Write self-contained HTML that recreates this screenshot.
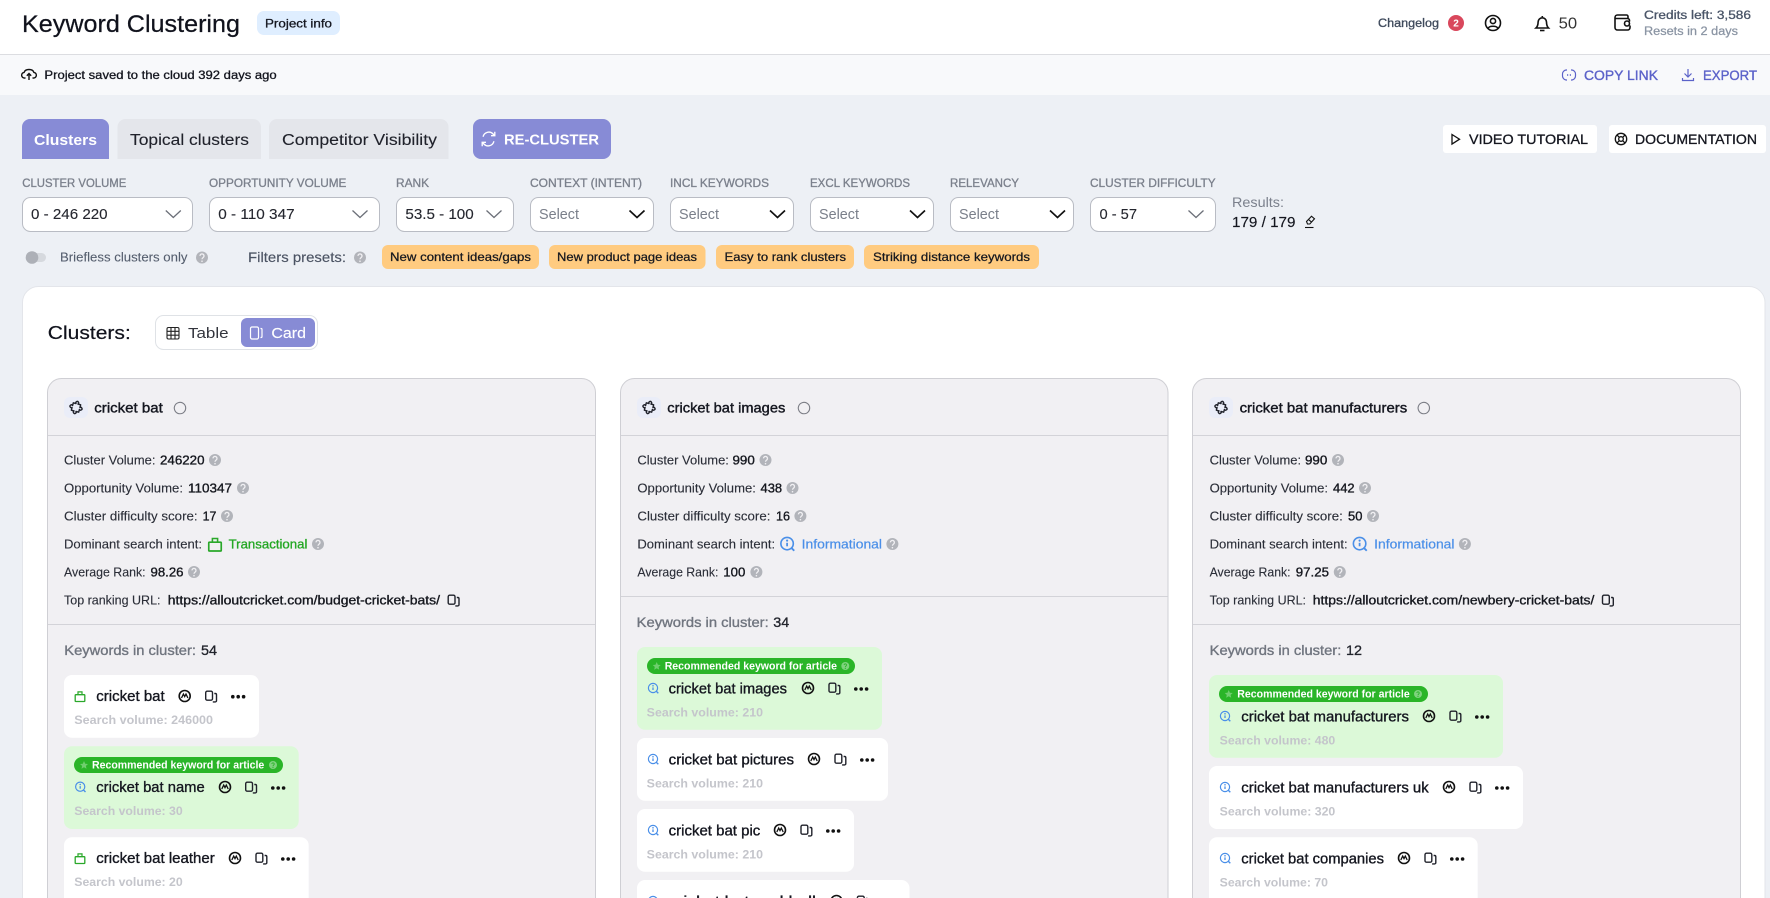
<!DOCTYPE html>
<html lang="en">
<head>
<meta charset="utf-8">
<title>Keyword Clustering</title>
<style>
html,body{margin:0;padding:0;background:#edf0f5;width:1770px;height:898px;overflow:hidden}
svg{display:block;font-family:"Liberation Sans",sans-serif}
.m{stroke-width:.3px}
.k{fill:#14161f;stroke:#14161f}
.lab{fill:#7b808c;stroke:#7b808c;stroke-width:.3px;font-size:11.5px}
.sv{fill:#24262e;font-size:14.5px;stroke:#24262e;stroke-width:.12px}
.ph{fill:#7a7f8a;font-size:14.5px}
.box{fill:#fff;stroke:#b9bcc4;stroke-width:1}
.pre{fill:#ffcb80}
.pt{fill:#16181f;stroke:#16181f;stroke-width:.25px;font-size:12px}
.card{fill:#f1f0f3;stroke:#cfcfd4;stroke-width:1}
.sep{stroke:#d3d3d8;stroke-width:1}
.il{fill:#2b2e38;font-size:12.5px;stroke:#2b2e38;stroke-width:.12px}
.iv{fill:#16181f;stroke:#16181f;stroke-width:.35px;font-size:12.5px}
.ct{fill:#14161f;stroke:#14161f;stroke-width:.4px;font-size:14px}
.kh{fill:#70757f;stroke:#70757f;stroke-width:.35px;font-size:14px}
.kv{fill:#22242c;stroke:#22242c;stroke-width:.3px;font-size:14px}
.kw{fill:#14161f;stroke:#14161f;stroke-width:.35px;font-size:14.5px}
.sr{fill:#c4c5cb;font-size:12px;font-weight:bold}
.rc{fill:#fff;font-size:11px;font-weight:bold}
.w{fill:#fff}
.g{fill:#dcf9d8}
</style>
</head>
<body>
<svg width="1770" height="898" viewBox="0 0 1770 898" xmlns="http://www.w3.org/2000/svg">
<defs>
  <g id="q"><circle r="6" fill="#b2b4ba"/><path d="M-2-1.6a2 2 0 1 1 3.2 1.6C.4.6 0 1 0 1.8" fill="none" stroke="#f1f0f3" stroke-width="1.3"/><circle cy="3.7" r=".8" fill="#f1f0f3"/></g>
  <g id="chg"><path d="M-7.5-3.5 0 3.5 7.5-3.5" fill="none" stroke="#6b6f78" stroke-width="1.3"/></g>
  <g id="chb"><path d="M-7.5-3.5 0 3.5 7.5-3.5" fill="none" stroke="#111" stroke-width="1.7"/></g>
  <g id="pz"><path transform="rotate(15)" d="M-3.8-3.8H-1a1.4 1.4 0 1 1 2 0H3.8V-1a1.4 1.4 0 1 1 0 2V3.8H1a1.4 1.4 0 1 1-2 0H-3.8V1a1.4 1.4 0 1 1 0-2Z" fill="none" stroke="#20222b" stroke-width="1.4" stroke-linejoin="round"/></g>
  <g id="cm"><path d="M4.3 4.8A5.7 5.7 0 1 1 5.7 1c0 1.400-.4 2.700-1.400 3.800z" fill="none" stroke="#7b7d85" stroke-width="1.1"/></g>
  <g id="a"><circle r="5.5" fill="none" stroke="#111" stroke-width="1.6"/><path d="M-3.2 2-1.300-1.900 0 .6 1.300-1.900 3.200 2" fill="none" stroke="#111" stroke-width="1.3"/></g>
  <g id="cp"><rect x=".7" y=".7" width="6.800" height="9" rx="1.500" fill="none" stroke="#20222b" stroke-width="1.400"/><path d="M9.300 3h1a1.200 1.200 0 0 1 1.200 1.200v6a1.200 1.200 0 0 1-1.200 1.200H7.800" fill="none" stroke="#20222b" stroke-width="1.400"/></g>
  <g id="d"><circle cx="1.800" r="1.800" fill="#111"/><circle cx="7.200" r="1.800" fill="#111"/><circle cx="12.600" r="1.800" fill="#111"/></g>
  <g id="bag"><rect x="-4.800" y="-1.800" width="9.600" height="6.800" rx=".6" fill="none" stroke="#2aa82a" stroke-width="1.300"/><path d="M-2-1.800v-2.800h4v2.800" fill="none" stroke="#2aa82a" stroke-width="1.200"/></g>
  <g id="inf"><circle cx="-.3" cy="-.3" r="4.600" fill="none" stroke="#4a8fe8" stroke-width="1.200"/><path d="M-.3-.9v2.600" stroke="#4a8fe8" stroke-width="1.300"/><circle cx="-.3" cy="-2.500" r=".8" fill="#4a8fe8"/><path d="M3 3 5 5" stroke="#4a8fe8" stroke-width="1.400"/></g>
  <g id="st"><path d="M0-4 1.200-1.300 4-1 1.900.9 2.500 3.700 0 2.300-2.500 3.700-1.900.9-4-1-1.200-1.300z" fill="#6fce6e"/></g>
  <g id="qg"><circle r="4" fill="#7fd27e"/><path d="M-1.200-1a1.200 1.200 0 1 1 1.900 1C.2.400 0 .6 0 1.100" fill="none" stroke="#2ab528" stroke-width=".9"/><circle cy="2.400" r=".6" fill="#2ab528"/></g>
</defs>

<!-- top bar -->
<rect width="1770" height="54" fill="#fff"/>
<rect y="54" width="1770" height="1" fill="#dcdde1"/>
<rect y="55" width="1770" height="40" fill="#f8f9fb"/>
<text x="22" y="32" font-size="24.5" fill="#10121c" stroke="#10121c" stroke-width=".25" textLength="218" lengthAdjust="spacingAndGlyphs">Keyword Clustering</text>
<rect x="257" y="11" width="83" height="24" rx="7" fill="#dfeeff"/>
<text x="265" y="27.5" font-size="12" class="m k" textLength="67" lengthAdjust="spacingAndGlyphs">Project info</text>

<text x="1378" y="27" font-size="11.5" fill="#3f4a5c" stroke="#3f4a5c" stroke-width=".3" textLength="61" lengthAdjust="spacingAndGlyphs">Changelog</text>
<circle cx="1456" cy="23" r="8" fill="#d9475c"/>
<text x="1456" y="26.5" font-size="10" font-weight="bold" fill="#fff" text-anchor="middle">2</text>
<g fill="none" stroke="#111" stroke-width="1.6">
  <circle cx="1493" cy="23" r="7.5"/><circle cx="1493" cy="21" r="2.6"/><path d="M1488 28.500c1-3 9-3 10 0"/>
  <path d="M1536 28h12.500c-1.500-1.500-2-3-2-6a4.200 4.200 0 0 0-8.400 0c0 3-.5 4.500-2.100 6z"/><path d="M1540 30.500h4.500"/><path d="M1542.300 16v1"/>
  <path d="M1628 18v-1.500a1.500 1.500 0 0 0-1.500-1.500h-9a2.500 2.500 0 0 0-2.500 2.500v10a2.500 2.500 0 0 0 2.500 2.500h10a2.500 2.500 0 0 0 2.500-2.500v-2"/><path d="M1615.500 18.500h12a2 2 0 0 1 2 2v1"/>
  <circle cx="1627" cy="23.500" r="2.500"/>
</g>
<text x="1558.7" y="28.5" font-size="15.5" fill="#333" textLength="18.5" lengthAdjust="spacingAndGlyphs">50</text>
<text x="1644" y="18.8" font-size="11.5" fill="#4a5568" stroke="#4a5568" stroke-width=".3" textLength="107" lengthAdjust="spacingAndGlyphs">Credits left: 3,586</text>
<text x="1644" y="35" font-size="11.5" fill="#8a94a3" stroke="#8a94a3" stroke-width=".25" textLength="94" lengthAdjust="spacingAndGlyphs">Resets in 2 days</text>

<!-- saved bar -->
<g fill="none" stroke="#111" stroke-width="1.4">
  <path d="M25.500 78h-.7a2.800 2.800 0 0 1-.7-5.600c.5-1.800 2.500-2.900 4.900-2.900s4.400 1.100 4.900 2.900a2.800 2.800 0 0 1-.7 5.600h-.7"/><path d="M29 80v-6.500m-2.200 2.200 2.200-2.200 2.200 2.200"/>
</g>
<text x="44.4" y="79" font-size="12" class="m k" textLength="232.3" lengthAdjust="spacingAndGlyphs">Project saved to the cloud 392 days ago</text>
<g fill="none" stroke="#5b62c9" stroke-width="1.2">
  <path d="M1567 70h-1a4 4 0 0 0-3.500 4v2a4 4 0 0 0 3.500 4h1M1571 70h1a4 4 0 0 1 3.500 4v2a4 4 0 0 1-3.500 4h-1"/><path d="M1567 75h1.200m1.600 0h1.200" stroke-width="1.600"/>
  <path d="M1688 69v8m-3.500-3.500 3.500 3.500 3.500-3.500M1682.500 78v2.500h11V78"/>
</g>
<text x="1584" y="80" font-size="13.5" fill="#5b62c9" stroke="#5b62c9" stroke-width=".35" textLength="74" lengthAdjust="spacingAndGlyphs">COPY LINK</text>
<text x="1703" y="80" font-size="13.5" fill="#5b62c9" stroke="#5b62c9" stroke-width=".35" textLength="54" lengthAdjust="spacingAndGlyphs">EXPORT</text>

<!-- tabs -->
<path d="M22 159v-32a8 8 0 0 1 8-8h71a8 8 0 0 1 8 8v32z" fill="#878bd6"/>
<text x="34" y="145" font-size="15" font-weight="bold" fill="#fff" textLength="63" lengthAdjust="spacingAndGlyphs">Clusters</text>
<path d="M117.500 159v-32a8 8 0 0 1 8-8H253a8 8 0 0 1 8 8v32z" fill="#e4e6eb"/>
<text x="130" y="145" font-size="15.5" fill="#20222b" stroke="#20222b" stroke-width=".1" textLength="119" lengthAdjust="spacingAndGlyphs">Topical clusters</text>
<path d="M269 159v-32a8 8 0 0 1 8-8h163.500a8 8 0 0 1 8 8v32z" fill="#e4e6eb"/>
<text x="282" y="145" font-size="15.5" fill="#20222b" stroke="#20222b" stroke-width=".1" textLength="155" lengthAdjust="spacingAndGlyphs">Competitor Visibility</text>
<rect x="473" y="119" width="138" height="40" rx="8" fill="#878bd6"/>
<g fill="none" stroke="#fff" stroke-width="1.5" transform="translate(488.500 139) scale(.9) translate(-488.500 -139)">
  <path d="M482.500 136.500a6.500 6.500 0 0 1 11-3.200l1.500 1.700m.5-4v4.300h-4.200"/><path d="M494.500 141.500a6.500 6.500 0 0 1-11 3.200l-1.500-1.700m-.5 4v-4.300h4.200"/>
</g>
<text x="504" y="144.5" font-size="14.5" font-weight="bold" fill="#fff" textLength="95" lengthAdjust="spacingAndGlyphs">RE-CLUSTER</text>

<rect x="1443" y="125" width="154" height="28" rx="3" fill="#fff"/>
<path d="M1452 134.500v9.500l7.500-4.800z" fill="none" stroke="#111" stroke-width="1.3"/>
<text x="1469" y="144" font-size="13.5" class="m k" textLength="119" lengthAdjust="spacingAndGlyphs">VIDEO TUTORIAL</text>
<rect x="1609" y="125" width="157" height="28" rx="3" fill="#fff"/>
<g fill="none" stroke="#111" stroke-width="1.3"><circle cx="1621" cy="139" r="5.7"/><circle cx="1621" cy="139" r="2.3"/><path d="M1617 135l2.400 2.400m3.200 3.200 2.400 2.400m0-8-2.400 2.400m-3.200 3.200-2.400 2.400"/></g>
<text x="1635" y="144" font-size="13.5" class="m k" textLength="122" lengthAdjust="spacingAndGlyphs">DOCUMENTATION</text>

<!-- filter labels -->
<text x="22.3" y="187" class="lab" textLength="104" lengthAdjust="spacingAndGlyphs">CLUSTER VOLUME</text>
<text x="209" y="187" class="lab" textLength="137.4" lengthAdjust="spacingAndGlyphs">OPPORTUNITY VOLUME</text>
<text x="396" y="187" class="lab" textLength="33" lengthAdjust="spacingAndGlyphs">RANK</text>
<text x="530" y="187" class="lab" textLength="112" lengthAdjust="spacingAndGlyphs">CONTEXT (INTENT)</text>
<text x="670" y="187" class="lab" textLength="99" lengthAdjust="spacingAndGlyphs">INCL KEYWORDS</text>
<text x="810" y="187" class="lab" textLength="100" lengthAdjust="spacingAndGlyphs">EXCL KEYWORDS</text>
<text x="950" y="187" class="lab" textLength="69" lengthAdjust="spacingAndGlyphs">RELEVANCY</text>
<text x="1090" y="187" class="lab" textLength="125.6" lengthAdjust="spacingAndGlyphs">CLUSTER DIFFICULTY</text>

<!-- selects -->
<rect class="box" x="22.5" y="197.5" width="170" height="34" rx="8"/>
<rect class="box" x="209.5" y="197.5" width="170" height="34" rx="8"/>
<rect class="box" x="396.5" y="197.5" width="117" height="34" rx="8"/>
<rect class="box" x="530.5" y="197.5" width="123" height="34" rx="8"/>
<rect class="box" x="670.5" y="197.5" width="123" height="34" rx="8"/>
<rect class="box" x="810.5" y="197.5" width="123" height="34" rx="8"/>
<rect class="box" x="950.5" y="197.5" width="123" height="34" rx="8"/>
<rect class="box" x="1090.5" y="197.5" width="125" height="34" rx="8"/>
<text x="31" y="219" class="sv" textLength="76.6" lengthAdjust="spacingAndGlyphs">0 - 246 220</text>
<text x="218.3" y="219" class="sv" textLength="76.3" lengthAdjust="spacingAndGlyphs">0 - 110 347</text>
<text x="405.4" y="219" class="sv" textLength="68.3" lengthAdjust="spacingAndGlyphs">53.5 - 100</text>
<text x="539" y="219" class="ph" textLength="40" lengthAdjust="spacingAndGlyphs">Select</text>
<text x="679" y="219" class="ph" textLength="40" lengthAdjust="spacingAndGlyphs">Select</text>
<text x="819" y="219" class="ph" textLength="40" lengthAdjust="spacingAndGlyphs">Select</text>
<text x="959" y="219" class="ph" textLength="40" lengthAdjust="spacingAndGlyphs">Select</text>
<text x="1099.5" y="219" class="sv" textLength="37.5" lengthAdjust="spacingAndGlyphs">0 - 57</text>
<use href="#chg" x="173.3" y="214"/>
<use href="#chg" x="360" y="214"/>
<use href="#chg" x="494" y="214"/>
<use href="#chb" x="637" y="214"/>
<use href="#chb" x="777.5" y="214"/>
<use href="#chb" x="917.5" y="214"/>
<use href="#chb" x="1057.5" y="214"/>
<use href="#chg" x="1196" y="214"/>
<text x="1232" y="207" font-size="14" fill="#7b808c" textLength="52" lengthAdjust="spacingAndGlyphs">Results:</text>
<text x="1232" y="227" font-size="14.5" fill="#14161f" stroke="#14161f" stroke-width=".15" textLength="63.5" lengthAdjust="spacingAndGlyphs">179 / 179</text>
<g fill="none" stroke="#111" stroke-width="1.1"><path d="M1306.500 221.500l5-5.300 3 2.600-4.700 5.200h-2.300zM1308.500 219.500l3 2.600"/><path d="M1305 227.500h8.500"/></g>

<!-- toggle row -->
<rect x="28" y="253" width="18" height="9" rx="4.5" fill="#d6d9de"/>
<circle cx="32" cy="257.5" r="6.3" fill="#adb0b7"/>
<text x="60" y="261.5" font-size="12.5" fill="#555e6e" stroke="#555e6e" stroke-width=".1" textLength="127.5" lengthAdjust="spacingAndGlyphs">Briefless clusters only</text>
<use href="#q" x="202" y="257.5"/>
<text x="248" y="262" font-size="14" fill="#4b5363" stroke="#4b5363" stroke-width=".15" textLength="98" lengthAdjust="spacingAndGlyphs">Filters presets:</text>
<use href="#q" x="360" y="257.5"/>
<rect class="pre" x="382" y="245" width="157" height="24" rx="6"/>
<rect class="pre" x="549" y="245" width="156.5" height="24" rx="6"/>
<rect class="pre" x="716" y="245" width="138" height="24" rx="6"/>
<rect class="pre" x="864" y="245" width="175" height="24" rx="6"/>
<text x="390" y="261" class="pt" textLength="141" lengthAdjust="spacingAndGlyphs">New content ideas/gaps</text>
<text x="557" y="261" class="pt" textLength="140" lengthAdjust="spacingAndGlyphs">New product page ideas</text>
<text x="724.5" y="261" class="pt" textLength="121.5" lengthAdjust="spacingAndGlyphs">Easy to rank clusters</text>
<text x="873" y="261" class="pt" textLength="157" lengthAdjust="spacingAndGlyphs">Striking distance keywords</text>

<!-- panel -->
<rect x="22.5" y="286.5" width="1742.5" height="640" rx="16" fill="#fff" stroke="#e3e5ea"/>
<text x="47.8" y="339" font-size="18.5" fill="#10121c" stroke="#10121c" stroke-width=".2" textLength="83" lengthAdjust="spacingAndGlyphs">Clusters:</text>
<rect x="155.5" y="315.5" width="162" height="34" rx="8" fill="#fff" stroke="#dfe2e6"/>
<g fill="none" stroke="#222" stroke-width="1.1"><rect x="167" y="327.5" width="12" height="11.5" rx="1.5"/><path d="M171 327.500v11.500M175 327.500v11.500M167 331.300h12M167 335.200h12"/></g>
<text x="188" y="338" font-size="15" fill="#33353d" textLength="40.6" lengthAdjust="spacingAndGlyphs">Table</text>
<rect x="241" y="318" width="74" height="29" rx="6" fill="#878bd5"/>
<g fill="none" stroke="#fff" stroke-width="1.2"><rect x="250.5" y="327" width="8" height="12" rx="1.5"/><path d="M260.500 328.500h.5a1 1 0 0 1 1 1v7a1 1 0 0 1-1 1h-.5"/></g>
<text x="271.4" y="338" font-size="15" fill="#fff" stroke="#fff" stroke-width=".15" textLength="34.6" lengthAdjust="spacingAndGlyphs">Card</text>

<!-- card 1 -->
<rect class="card" x="47.5" y="378.5" width="548" height="560" rx="14"/>
<path class="sep" d="M48 435.500h547M48 624.500h547"/>
<rect x="64" y="397" width="24" height="21" rx="6" fill="#eaedf8"/>
<use href="#pz" x="76" y="407.5"/>
<text x="94.3" y="412.3" class="ct" textLength="68.5" lengthAdjust="spacingAndGlyphs">cricket bat</text>
<use href="#cm" x="180" y="407"/>
<text x="64" y="464.3" class="il" textLength="91.5" lengthAdjust="spacingAndGlyphs">Cluster Volume:</text>
<text x="160" y="464.3" class="iv" textLength="44.5" lengthAdjust="spacingAndGlyphs">246220</text>
<use href="#q" x="215" y="460"/>
<text x="64" y="492.3" class="il" textLength="119" lengthAdjust="spacingAndGlyphs">Opportunity Volume:</text>
<text x="188" y="492.3" class="iv" textLength="44" lengthAdjust="spacingAndGlyphs">110347</text>
<use href="#q" x="243" y="488"/>
<text x="64" y="520.3" class="il" textLength="133.6" lengthAdjust="spacingAndGlyphs">Cluster difficulty score:</text>
<text x="202.6" y="520.3" class="iv" textLength="13.8" lengthAdjust="spacingAndGlyphs">17</text>
<use href="#q" x="227" y="516"/>
<text x="64" y="548.3" class="il" textLength="138" lengthAdjust="spacingAndGlyphs">Dominant search intent:</text>
<use href="#bag" transform="translate(215 544.5) scale(1.3)"/>
<text x="228.6" y="548.3" font-size="12.5" fill="#22a722" stroke="#22a722" stroke-width=".3" textLength="78.8" lengthAdjust="spacingAndGlyphs">Transactional</text>
<use href="#q" x="318" y="544"/>
<text x="64" y="576.3" class="il" textLength="81.6" lengthAdjust="spacingAndGlyphs">Average Rank:</text>
<text x="150.5" y="576.3" class="iv" textLength="33" lengthAdjust="spacingAndGlyphs">98.26</text>
<use href="#q" x="194" y="572"/>
<text x="64" y="604.3" class="il" textLength="96.5" lengthAdjust="spacingAndGlyphs">Top ranking URL:</text>
<text x="167.8" y="604.3" class="iv" textLength="272.2" lengthAdjust="spacingAndGlyphs">https://alloutcricket.com/budget-cricket-bats/</text>
<use href="#cp" x="447.5" y="594.5"/>
<text x="64.3" y="655" class="kh" textLength="131.7" lengthAdjust="spacingAndGlyphs">Keywords in cluster:</text>
<text x="201" y="655" class="kv" textLength="16" lengthAdjust="spacingAndGlyphs">54</text>

<rect class="w" x="64" y="675" width="195" height="62.7" rx="8"/>
<use href="#bag" x="80" y="696.5"/>
<text x="96.3" y="701" class="kw" textLength="68.4" lengthAdjust="spacingAndGlyphs">cricket bat</text>
<use href="#a" x="184.7" y="696"/>
<use href="#cp" x="205" y="690.5"/>
<use href="#d" x="231" y="696.7"/>
<text x="74.3" y="724" class="sr" textLength="138.7" lengthAdjust="spacingAndGlyphs">Search volume: 246000</text>

<rect class="g" x="64" y="746.3" width="234.7" height="82.7" rx="8"/>
<rect x="74" y="757" width="209" height="16" rx="8" fill="#2ab528"/>
<use href="#st" x="84" y="765"/>
<text x="92" y="768.5" class="rc" textLength="172.3" lengthAdjust="spacingAndGlyphs">Recommended keyword for article</text>
<use href="#qg" x="273" y="765"/>
<use href="#inf" x="80.5" y="787"/>
<text x="96.3" y="792" class="kw" textLength="108.4" lengthAdjust="spacingAndGlyphs">cricket bat name</text>
<use href="#a" x="225" y="787"/>
<use href="#cp" x="245" y="781.5"/>
<use href="#d" x="271" y="788"/>
<text x="74.3" y="815" class="sr" textLength="108.4" lengthAdjust="spacingAndGlyphs">Search volume: 30</text>

<rect class="w" x="64" y="837.3" width="244.7" height="80" rx="8"/>
<use href="#bag" x="80" y="858.5"/>
<text x="96.3" y="863" class="kw" textLength="118.4" lengthAdjust="spacingAndGlyphs">cricket bat leather</text>
<use href="#a" x="235" y="858"/>
<use href="#cp" x="255.3" y="852.5"/>
<use href="#d" x="281" y="859"/>
<text x="74.3" y="886" class="sr" textLength="108.4" lengthAdjust="spacingAndGlyphs">Search volume: 20</text>

<!-- card 2 -->
<rect class="card" x="620.5" y="378.5" width="547.5" height="560" rx="14"/>
<path class="sep" d="M621 435.500h547M621 596.500h547"/>
<rect x="637" y="397" width="24" height="21" rx="6" fill="#eaedf8"/>
<use href="#pz" x="649" y="407.5"/>
<text x="667.3" y="412.3" class="ct" textLength="118" lengthAdjust="spacingAndGlyphs">cricket bat images</text>
<use href="#cm" x="804" y="407"/>
<text x="637.4" y="464.3" class="il" textLength="91.5" lengthAdjust="spacingAndGlyphs">Cluster Volume:</text>
<text x="732.5" y="464.3" class="iv" textLength="22.3" lengthAdjust="spacingAndGlyphs">990</text>
<use href="#q" x="765.5" y="460"/>
<text x="637.4" y="492.3" class="il" textLength="118.5" lengthAdjust="spacingAndGlyphs">Opportunity Volume:</text>
<text x="760.5" y="492.3" class="iv" textLength="21.6" lengthAdjust="spacingAndGlyphs">438</text>
<use href="#q" x="792.5" y="488"/>
<text x="637.4" y="520.3" class="il" textLength="133" lengthAdjust="spacingAndGlyphs">Cluster difficulty score:</text>
<text x="776" y="520.3" class="iv" textLength="14" lengthAdjust="spacingAndGlyphs">16</text>
<use href="#q" x="800.4" y="516"/>
<text x="637.4" y="548.3" class="il" textLength="137.7" lengthAdjust="spacingAndGlyphs">Dominant search intent:</text>
<use href="#inf" transform="translate(787.5 544) scale(1.35)"/>
<text x="801.7" y="548.3" font-size="12.5" fill="#4a8fe8" stroke="#4a8fe8" stroke-width=".2" textLength="80.3" lengthAdjust="spacingAndGlyphs">Informational</text>
<use href="#q" x="892.4" y="544"/>
<text x="637.4" y="576.3" class="il" textLength="81" lengthAdjust="spacingAndGlyphs">Average Rank:</text>
<text x="723.3" y="576.3" class="iv" textLength="22" lengthAdjust="spacingAndGlyphs">100</text>
<use href="#q" x="756.4" y="572"/>
<text x="636.7" y="627" class="kh" textLength="132" lengthAdjust="spacingAndGlyphs">Keywords in cluster:</text>
<text x="773.3" y="627" class="kv" textLength="16" lengthAdjust="spacingAndGlyphs">34</text>

<rect class="g" x="637" y="647" width="245" height="82.7" rx="8"/>
<rect x="647" y="658" width="208" height="16" rx="8" fill="#2ab528"/>
<use href="#st" x="656.7" y="666"/>
<text x="664.7" y="669.5" class="rc" textLength="172.3" lengthAdjust="spacingAndGlyphs">Recommended keyword for article</text>
<use href="#qg" x="845.3" y="666"/>
<use href="#inf" x="653.3" y="688.3"/>
<text x="668.7" y="693.3" class="kw" textLength="118.3" lengthAdjust="spacingAndGlyphs">cricket bat images</text>
<use href="#a" x="808" y="688"/>
<use href="#cp" x="828.3" y="682.5"/>
<use href="#d" x="854" y="689"/>
<text x="646.7" y="716.3" class="sr" textLength="116.3" lengthAdjust="spacingAndGlyphs">Search volume: 210</text>

<rect class="w" x="637" y="738" width="251" height="62.7" rx="8"/>
<use href="#inf" x="653.3" y="759.3"/>
<text x="668.7" y="764.3" class="kw" textLength="125.3" lengthAdjust="spacingAndGlyphs">cricket bat pictures</text>
<use href="#a" x="814" y="759"/>
<use href="#cp" x="834.3" y="753.5"/>
<use href="#d" x="860" y="760"/>
<text x="646.7" y="787.3" class="sr" textLength="116.3" lengthAdjust="spacingAndGlyphs">Search volume: 210</text>

<rect class="w" x="637" y="809" width="217" height="62.7" rx="8"/>
<use href="#inf" x="653.3" y="830.3"/>
<text x="668.7" y="835.3" class="kw" textLength="91.6" lengthAdjust="spacingAndGlyphs">cricket bat pic</text>
<use href="#a" x="780" y="830"/>
<use href="#cp" x="800.3" y="824.5"/>
<use href="#d" x="826" y="831"/>
<text x="646.7" y="858.3" class="sr" textLength="116.3" lengthAdjust="spacingAndGlyphs">Search volume: 210</text>

<rect class="w" x="637" y="880" width="272.5" height="62" rx="8"/>
<use href="#inf" x="653.3" y="901.3"/>
<text x="668.7" y="906.3" class="kw" textLength="147.3" lengthAdjust="spacingAndGlyphs">cricket bat and ball</text>
<use href="#a" x="836.5" y="901"/>
<use href="#cp" x="856.7" y="895.5"/>

<!-- card 3 -->
<rect class="card" x="1192.5" y="378.5" width="548" height="560" rx="14"/>
<path class="sep" d="M1193 435.500h547M1193 624.500h547"/>
<rect x="1209" y="397" width="24" height="21" rx="6" fill="#eaedf8"/>
<use href="#pz" x="1221" y="407.5"/>
<text x="1239.6" y="412.3" class="ct" textLength="167.6" lengthAdjust="spacingAndGlyphs">cricket bat manufacturers</text>
<use href="#cm" x="1423.8" y="407"/>
<text x="1209.6" y="464.3" class="il" textLength="91.5" lengthAdjust="spacingAndGlyphs">Cluster Volume:</text>
<text x="1305" y="464.3" class="iv" textLength="22.3" lengthAdjust="spacingAndGlyphs">990</text>
<use href="#q" x="1338" y="460"/>
<text x="1209.6" y="492.3" class="il" textLength="118.4" lengthAdjust="spacingAndGlyphs">Opportunity Volume:</text>
<text x="1333" y="492.3" class="iv" textLength="21.6" lengthAdjust="spacingAndGlyphs">442</text>
<use href="#q" x="1365" y="488"/>
<text x="1209.6" y="520.3" class="il" textLength="133.2" lengthAdjust="spacingAndGlyphs">Cluster difficulty score:</text>
<text x="1348" y="520.3" class="iv" textLength="14.4" lengthAdjust="spacingAndGlyphs">50</text>
<use href="#q" x="1373" y="516"/>
<text x="1209.6" y="548.3" class="il" textLength="138" lengthAdjust="spacingAndGlyphs">Dominant search intent:</text>
<use href="#inf" transform="translate(1360 544) scale(1.35)"/>
<text x="1374.2" y="548.3" font-size="12.5" fill="#4a8fe8" stroke="#4a8fe8" stroke-width=".2" textLength="80.3" lengthAdjust="spacingAndGlyphs">Informational</text>
<use href="#q" x="1464.9" y="544"/>
<text x="1209.6" y="576.3" class="il" textLength="81" lengthAdjust="spacingAndGlyphs">Average Rank:</text>
<text x="1295.8" y="576.3" class="iv" textLength="33.2" lengthAdjust="spacingAndGlyphs">97.25</text>
<use href="#q" x="1339.8" y="572"/>
<text x="1209.6" y="604.3" class="il" textLength="96.4" lengthAdjust="spacingAndGlyphs">Top ranking URL:</text>
<text x="1312.8" y="604.3" class="iv" textLength="281.6" lengthAdjust="spacingAndGlyphs">https://alloutcricket.com/newbery-cricket-bats/</text>
<use href="#cp" x="1601.8" y="594.5"/>
<text x="1209.7" y="655" class="kh" textLength="131.6" lengthAdjust="spacingAndGlyphs">Keywords in cluster:</text>
<text x="1346" y="655" class="kv" textLength="16" lengthAdjust="spacingAndGlyphs">12</text>

<rect class="g" x="1209" y="675" width="294" height="82.7" rx="8"/>
<rect x="1219" y="686" width="209" height="16" rx="8" fill="#2ab528"/>
<use href="#st" x="1228.7" y="694"/>
<text x="1237.3" y="697.5" class="rc" textLength="172.4" lengthAdjust="spacingAndGlyphs">Recommended keyword for article</text>
<use href="#qg" x="1418" y="694"/>
<use href="#inf" x="1225.3" y="716.3"/>
<text x="1241.3" y="721.3" class="kw" textLength="167.7" lengthAdjust="spacingAndGlyphs">cricket bat manufacturers</text>
<use href="#a" x="1429" y="716"/>
<use href="#cp" x="1449.3" y="710.5"/>
<use href="#d" x="1475" y="717"/>
<text x="1219.7" y="744.3" class="sr" textLength="115.6" lengthAdjust="spacingAndGlyphs">Search volume: 480</text>

<rect class="w" x="1209" y="766" width="314" height="63" rx="8"/>
<use href="#inf" x="1225.3" y="787.3"/>
<text x="1241.3" y="792.3" class="kw" textLength="187.4" lengthAdjust="spacingAndGlyphs">cricket bat manufacturers uk</text>
<use href="#a" x="1449" y="787"/>
<use href="#cp" x="1469.3" y="781.5"/>
<use href="#d" x="1495" y="788"/>
<text x="1219.7" y="815.3" class="sr" textLength="115.6" lengthAdjust="spacingAndGlyphs">Search volume: 320</text>

<rect class="w" x="1209" y="837.3" width="268.7" height="80" rx="8"/>
<use href="#inf" x="1225.3" y="858.3"/>
<text x="1241.3" y="863.3" class="kw" textLength="142.7" lengthAdjust="spacingAndGlyphs">cricket bat companies</text>
<use href="#a" x="1404" y="858"/>
<use href="#cp" x="1424.3" y="852.5"/>
<use href="#d" x="1450" y="859"/>
<text x="1219.7" y="886.3" class="sr" textLength="108.3" lengthAdjust="spacingAndGlyphs">Search volume: 70</text>
</svg>
</body>
</html>
